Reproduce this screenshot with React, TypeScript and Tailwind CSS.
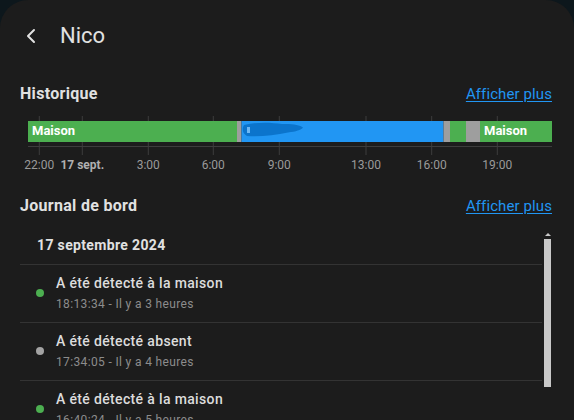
import { ChevronLeft } from "lucide-react";

const segments = [
  { from: 8, to: 217, color: "#4caf50", label: "Maison" },
  { from: 217, to: 221.5, color: "#9e9e9e" },
  { from: 221.5, to: 423.5, color: "#2196f3" },
  { from: 423.5, to: 430, color: "#9e9e9e" },
  { from: 430, to: 446, color: "#4caf50" },
  { from: 446, to: 460, color: "#9e9e9e" },
  { from: 460, to: 532, color: "#4caf50", label: "Maison" },
];

const ticks = [
  { x: 19.3, label: "22:00" },
  { x: 62.3, label: "17 sept.", bold: true },
  { x: 128.3, label: "3:00" },
  { x: 193.3, label: "6:00" },
  { x: 259.3, label: "9:00" },
  { x: 346, label: "13:00" },
  { x: 411.7, label: "16:00" },
  { x: 477.3, label: "19:00" },
];

const entries = [
  { title: "A été détecté à la maison", sub: "18:13:34 - Il y a 3 heures", dot: "bg-[#4caf50]" },
  { title: "A été détecté absent", sub: "17:34:05 - Il y a 4 heures", dot: "bg-[#a3a3a3]" },
  { title: "A été détecté à la maison", sub: "16:40:24 - Il y a 5 heures", dot: "bg-[#4caf50]" },
];

function Timeline() {
  return (
    <svg width={532} height={70} className="block" style={{ fontFamily: "Roboto, sans-serif" }}>
      {ticks.map((t) => (
        <line key={t.label} x1={t.x} x2={t.x} y1={10} y2={49} stroke="#3d3d3d" strokeWidth={1} />
      ))}
      <line x1={8} x2={532} y1={40.5} y2={40.5} stroke="#3d3d3d" strokeWidth={1} />
      {segments.map((s, i) => (
        <rect key={i} x={s.from} y={15} width={s.to - s.from} height={21} fill={s.color} />
      ))}
      {/* gribouillis masquant le nom */}
      <path
        d="M224 19 C238 15.5 252 16.5 262 18 C272 17.5 280 19 283 21.5 C281 24 276 25.5 268 26.5 C255 29.5 238 31 227 30 C222 27.5 222 22 224 19 Z"
        fill="#0b74cc"
      />
      <rect x={227} y={21} width={3} height={6} fill="#6db8f5" />
      {segments
        .filter((s) => s.label)
        .map((s, i) => (
          <text key={i} x={s.from + 4} y={29} fill="#ffffff" fontSize={13} fontWeight={700}>
            {s.label}
          </text>
        ))}
      {ticks.map((t) => (
        <text
          key={t.label}
          x={t.x}
          y={63}
          textAnchor="middle"
          fill={t.bold ? "#b0b0b0" : "#9a9a9a"}
          fontSize={12}
          fontWeight={t.bold ? 700 : 400}
        >
          {t.label}
        </text>
      ))}
    </svg>
  );
}

function SectionHeader({ title, className }: { title: string; className: string }) {
  return (
    <div className={`flex items-baseline justify-between ${className}`}>
      <h2 className="text-[16px] leading-[24px] font-bold tracking-[0.3px] text-[#e1e1e1]">{title}</h2>
      <a className="text-[15px] leading-[20px] tracking-[0.1px] text-[#2196f3] underline underline-offset-[2px]">
        Afficher plus
      </a>
    </div>
  );
}

export default function App() {
  return (
    <div className="w-[574px] h-[420px] bg-[#0d171c] overflow-hidden" style={{ fontFamily: "Roboto, 'Liberation Sans', sans-serif" }}>
      <div className="h-full bg-[#1c1c1c] rounded-t-[28px] pt-[22px]">
        {/* En-tête */}
        <div className="flex items-center h-[28px] pl-[19px]">
          <ChevronLeft size={24} strokeWidth={2} className="text-[#e1e1e1]" />
          <span className="ml-[17px] text-[22px] leading-[28px] text-[#e1e1e1]">Nico</span>
        </div>

        <div className="pl-[20px] pr-[22px]">
          {/* Historique */}
          <SectionHeader title="Historique" className="mt-[32px]" />
          <Timeline />

          {/* Journal de bord */}
          <SectionHeader title="Journal de bord" className="mt-[18px]" />
          <div className="flex mt-[10px]">
            <div className="flex-1">
              <div className="pt-[7px] pb-[9px] pl-[17px] text-[14px] leading-[20px] font-bold tracking-[0.35px] text-[#e1e1e1]">
                17 septembre 2024
              </div>
              {entries.map((e, i) => (
                <div key={i} className="border-t border-[#333333] flex items-center pt-[8px] pb-[10px]">
                  <div className={`w-[8px] h-[8px] rounded-full ml-[16px] ${e.dot}`} />
                  <div className="ml-[12px]">
                    <div className="text-[14px] leading-[20px] font-medium tracking-[0.35px] text-[#dcdcdc]">{e.title}</div>
                    <div className="mt-[3px] text-[12px] leading-[16px] tracking-[0.35px] text-[#8c8c8c]">{e.sub}</div>
                  </div>
                </div>
              ))}
            </div>
            {/* barre de défilement */}
            <div className="w-[7px] ml-[2px] mr-[1px] pt-[5px] flex flex-col items-center">
              <div className="w-0 h-0 border-l-[3px] border-r-[3px] border-b-[3px] border-l-transparent border-r-transparent border-b-[#c8c8c8]" />
              <div className="w-[7px] h-[148px] mt-[3px] bg-[#c8c8c8]" />
            </div>
          </div>
        </div>
      </div>
    </div>
  );
}
